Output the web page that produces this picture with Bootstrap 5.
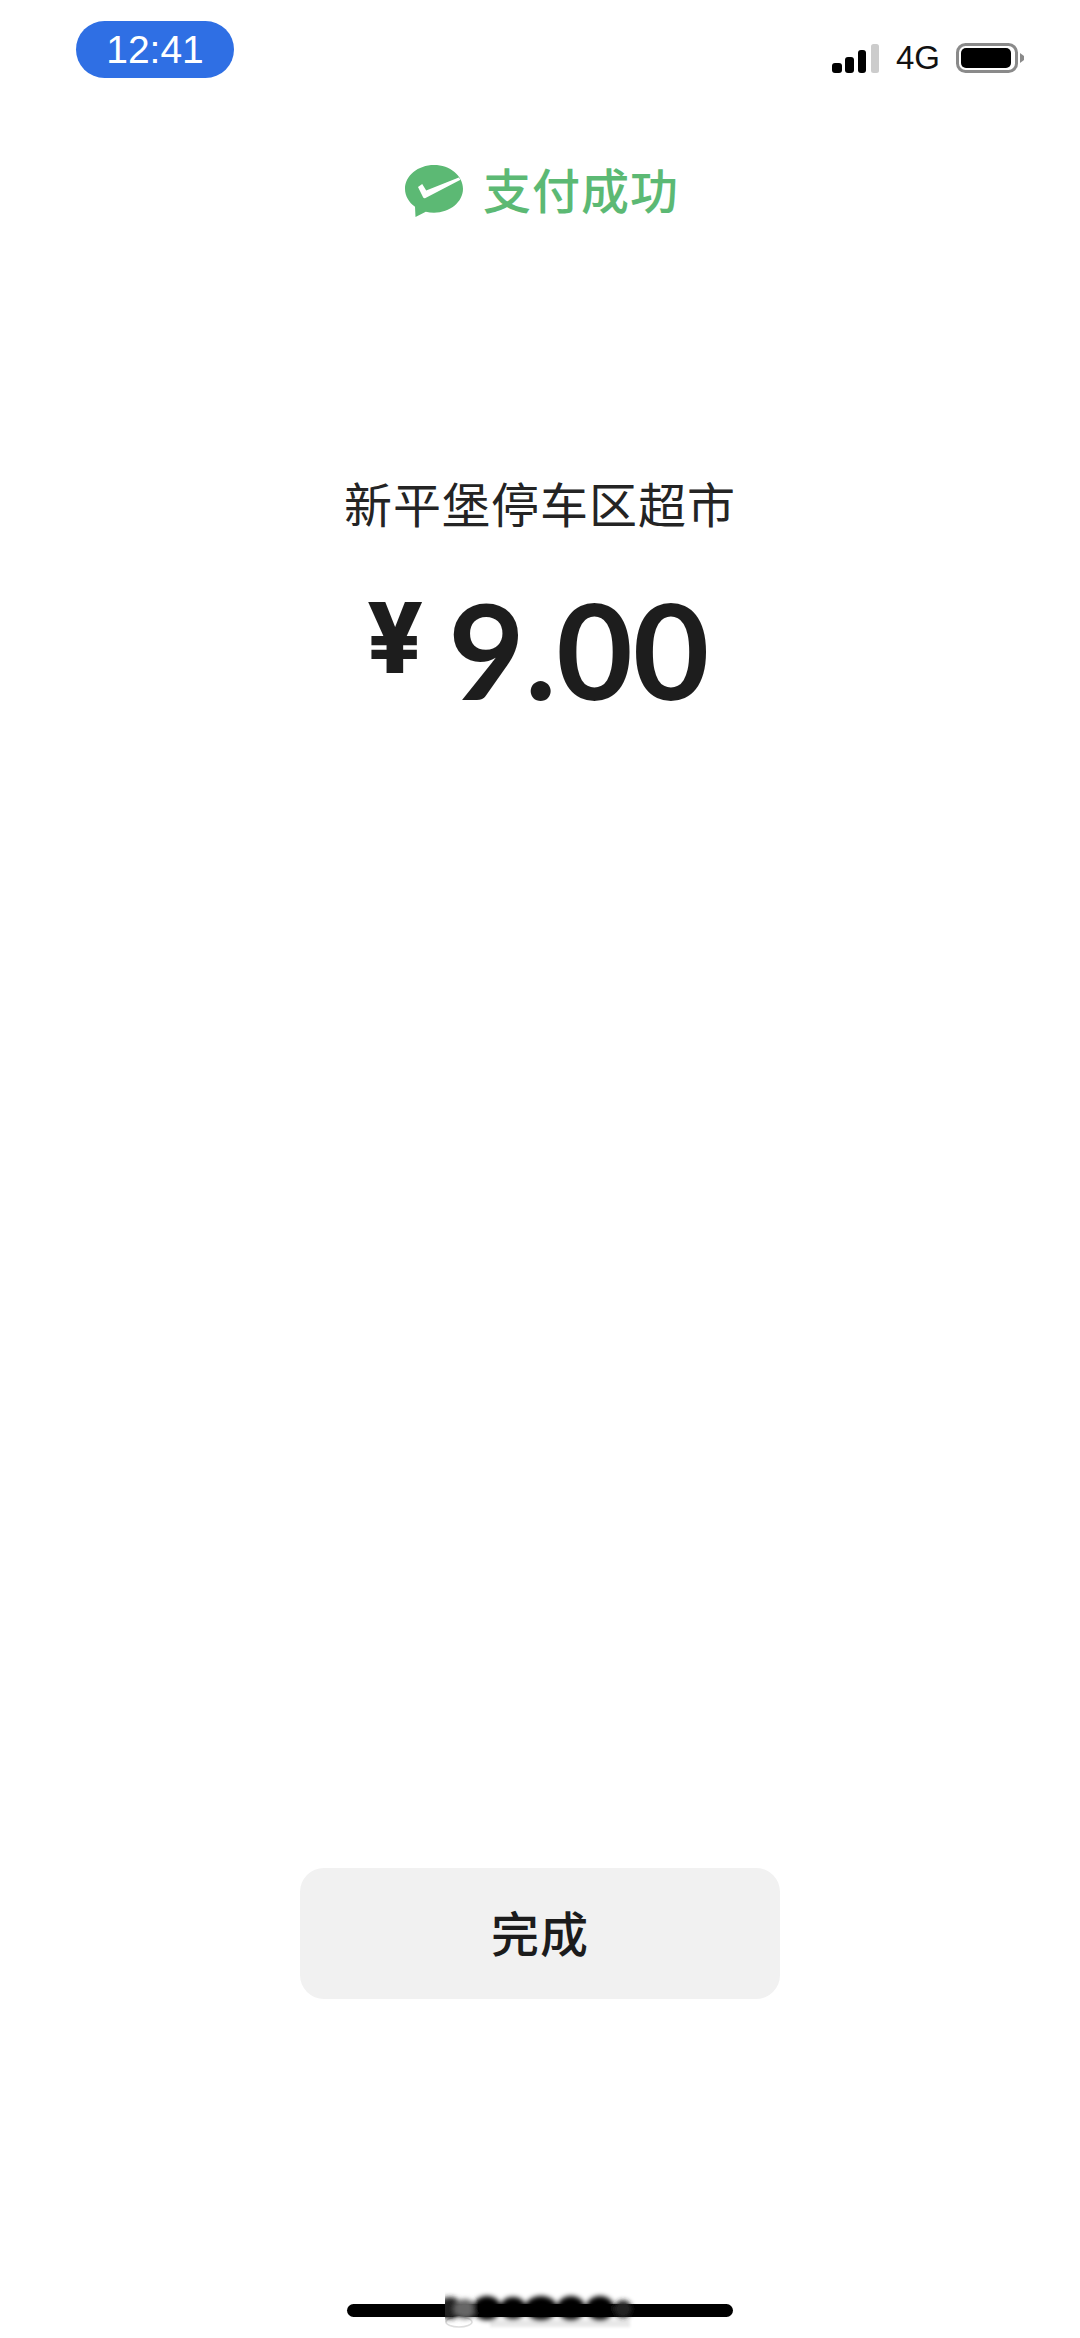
<!DOCTYPE html>
<html lang="zh-CN">
<head>
  <meta charset="UTF-8">
  <meta name="viewport" content="width=device-width, initial-scale=1.0">
  <title>支付成功</title>
  <link href="https://cdn.jsdelivr.net/npm/bootstrap@5.3.3/dist/css/bootstrap.min.css" rel="stylesheet">
  <style>
    body {
      background: #fff;
      color: #1d1d1d;
      font-family: "Noto Sans CJK SC", "Liberation Sans", sans-serif;
    }
    .screen {
      width: 1080px;
      height: 2338px;
      overflow: hidden;
    }
    .status-row {
      height: 78px;
      padding: 21px 56px 0 76px;
    }
    .time-pill {
      width: 158px;
      height: 57px;
      background: #2f6fe4;
      color: #fff;
      font: 39px/57px "Liberation Sans", sans-serif;
      border-radius: 29px;
    }
    .status-icons {
      margin-top: 22px;
      height: 30px;
    }
    .net-label {
      font: 33px/30px "Liberation Sans", sans-serif;
      color: #111;
      margin: 0 16px 0 16px;
    }
    .pay-head {
      margin-top: 87px;
      margin-left: 4px;
      height: 52px;
      gap: 20px;
    }
    .pay-title {
      color: #5cb974;
      font-size: 48px;
      line-height: 52px;
      font-weight: 500;
      letter-spacing: 1px;
      margin-bottom: 6px;
    }
    .shop-name {
      margin-top: 255px;
      font-size: 48px;
      line-height: 60px;
      letter-spacing: 1px;
      color: #242424;
    }
    .amount-row {
      margin-top: 52px;
      height: 130px;
      margin-right: 4px;
    }
    .yen {
      font: 800 98px/130px Inter, sans-serif;
      margin-right: 25px;
      position: relative;
      top: -11px;
    }
    .amount {
      font: 700 132px/130px Lato, sans-serif;
    }
    .done-btn {
      margin-top: 1154px;
      width: 480px;
      height: 131px;
      padding: 0 0 5px;
      background: #f1f1f1;
      border: 0;
      border-radius: 24px;
      color: #1c1c1c;
      font-size: 48px;
      font-weight: 500;
      letter-spacing: 1px;
    }
    .home-wrap {
      margin-top: 305px;
      width: 386px;
      height: 13px;
    }
    .home-bar {
      height: 13px;
      background: #000;
      border-radius: 7px;
    }
    .stamp {
      position: absolute;
      left: 98px;
      top: -20px;
    }
  </style>
</head>
<body>
  <div class="screen d-flex flex-column align-items-center">
    <!-- status bar -->
    <div class="status-row w-100 d-flex justify-content-between align-items-start">
      <div class="time-pill text-center">12:41</div>
      <div class="status-icons d-flex align-items-center">
        <svg width="48" height="30" viewBox="0 0 48 30">
          <rect x="0" y="20" width="10" height="10" rx="3" fill="#000"/>
          <rect x="13" y="14" width="9" height="16" rx="3" fill="#000"/>
          <rect x="26" y="7" width="8" height="23" rx="3" fill="#000"/>
          <rect x="39" y="1" width="8" height="29" rx="2.5" fill="#ccc"/>
        </svg>
        <span class="net-label">4G</span>
        <svg width="68" height="30" viewBox="0 0 68 30">
          <rect x="1.500" y="1.500" width="59" height="27" rx="8" fill="none" stroke="#8a8a8a" stroke-width="3"/>
          <rect x="5" y="5" width="50" height="20" rx="5" fill="#000"/>
          <path d="M64 10 l4 3 v4 l-4 3z" fill="#8a8a8a"/>
        </svg>
      </div>
    </div>

    <div class="pay-head d-flex align-items-center">
      <svg width="58" height="52" viewBox="0 0 58 52">
        <path d="M29 0C13 0 0 10.700 0 23.800c0 7.200 3.900 13.700 10 18L10.500 52l10.300-5.200c2.600.6 5.400.9 8.200.9 16 0 29-10.700 29-23.900S45 0 29 0z" fill="#5cb974"/>
        <path d="M13 22l4.200-3 4 6.500L53.800 12.500l1.700 2.300L20.500 33c-1 .5-1.800.2-2.300-.6z" fill="#fff"/>
      </svg>
      <span class="pay-title">支付成功</span>
    </div>

    <div class="shop-name">新平堡停车区超市</div>

    <div class="amount-row d-flex align-items-start">
      <span class="yen">¥</span>
      <span class="amount">9.00</span>
    </div>

    <button type="button" class="btn done-btn">完成</button>

    <!-- home indicator with the blurred watermark over it -->
    <div class="home-wrap position-relative">
      <div class="home-bar"></div>
      <svg class="stamp" width="210" height="60" viewBox="0 0 210 60">
        <defs>
          <filter id="smudge" x="-20%" y="-50%" width="140%" height="200%">
            <feGaussianBlur stdDeviation="2.500"/>
          </filter>
          <filter id="faint" x="-20%" y="-100%" width="140%" height="300%">
            <feGaussianBlur stdDeviation="1.500"/>
          </filter>
        </defs>
        <ellipse cx="14" cy="38" rx="13" ry="5" fill="none" stroke="#ddd" stroke-width="1.500"/>
        <rect x="45" y="36" width="140" height="7" fill="#e8e8e8" filter="url(#faint)"/>
        <g filter="url(#smudge)">
          <ellipse cx="5" cy="24" rx="12" ry="11" fill="#222"/>
          <ellipse cx="20" cy="25" rx="11" ry="10" fill="#666"/>
          <ellipse cx="42" cy="24" rx="14" ry="12" fill="#000"/>
          <ellipse cx="68" cy="24" rx="13" ry="11" fill="#000"/>
          <ellipse cx="96" cy="24" rx="16" ry="12" fill="#000"/>
          <ellipse cx="126" cy="24" rx="14" ry="12" fill="#000"/>
          <ellipse cx="155" cy="24" rx="14" ry="12" fill="#000"/>
          <ellipse cx="178" cy="25" rx="9" ry="9" fill="#222"/>
        </g>
      </svg>
    </div>
  </div>
  <script src="https://cdn.jsdelivr.net/npm/bootstrap@5.3.3/dist/js/bootstrap.bundle.min.js"></script>
</body>
</html>
